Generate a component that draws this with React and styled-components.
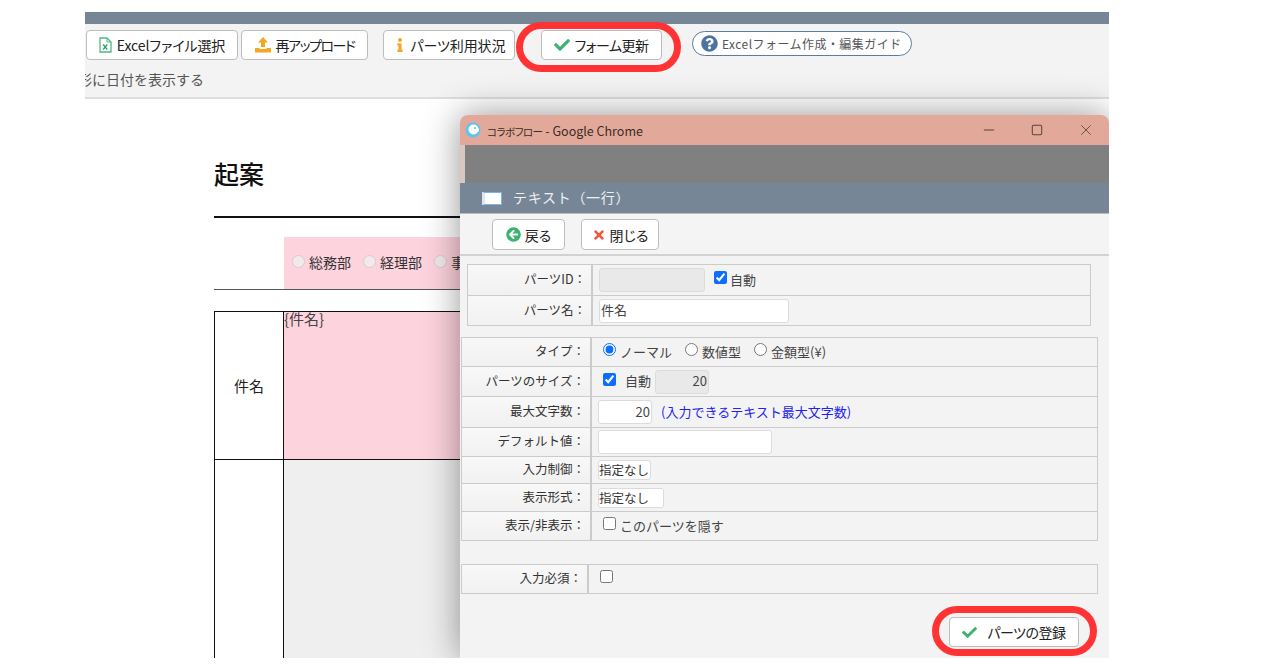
import React from 'react';
import styled, { createGlobalStyle } from 'styled-components';
import {
  FaArrowCircleLeft, FaCheck, FaInfo, FaQuestionCircle, FaTimes,
} from 'react-icons/fa';

const GlobalStyle = createGlobalStyle`
  html, body {
    margin: 0;
    padding: 0;
    background: #fff;
    overflow: hidden;
  }
  body {
    font-family: "Noto Sans CJK JP", "Noto Sans", sans-serif;
  }
  * { box-sizing: border-box; }
`;

const Screen = styled.div`
  position: relative;
  width: 1024px;
  height: 646px;
  margin: 12px 0 0 85px;
  overflow: hidden;
  background: #fff;
`;

const TopBar = styled.div`
  height: 12px;
  background: #768696;
`;

const Toolbar = styled.div`
  height: 75px;
  background: #f3f3f3;
  border-bottom: 2px solid #dedede;
  overflow: hidden;
`;

const ButtonRow = styled.div`
  display: flex;
  align-items: flex-start;
  padding: 6px 0 0 1px;
`;

const Button = styled.div`
  display: flex;
  align-items: center;
  justify-content: center;
  gap: ${(props) => props.gap || 4}px;
  flex: none;
  width: ${(props) => props.width}px;
  height: ${(props) => props.height || 30}px;
  margin-left: ${(props) => props.left || 0}px;
  background: #fff;
  border: 1px solid #bdbdbd;
  border-radius: 4px;
  font-size: 14px;
  font-feature-settings: "palt";
  letter-spacing: ${(props) => props.spacing || 0}px;
  color: #222;
  white-space: nowrap;
`;

const GuidePill = styled.div`
  display: flex;
  align-items: center;
  gap: 4px;
  flex: none;
  width: 220px;
  height: 25px;
  margin: 1px 0 0 30px;
  padding-left: 8px;
  background: #fff;
  border: 1px solid #5c7ca3;
  border-radius: 13px;
  font-size: 12px;
  letter-spacing: 0.45px;
  color: #555;
  white-space: nowrap;
`;

const HintText = styled.div`
  margin: 9px 0 0 -7px;
  font-size: 14px;
  line-height: 20px;
  color: #555;
`;

const DocArea = styled.div`
  padding-left: 129px;
`;

const DocTitle = styled.h1`
  height: 119px;
  margin: 0;
  padding-top: 54px;
  font-size: 25px;
  line-height: 40px;
  font-weight: 500;
  color: #111;
  border-bottom: 2px solid #111;
`;

const RadioLine = styled.div`
  height: 72px;
  padding: 19px 0 0 70px;
  border-bottom: 1px solid #555;
`;

const PinkStrip = styled.div`
  display: flex;
  align-items: center;
  gap: 12px;
  height: 52px;
  padding: 0 0 3px 8px;
  background: #fdd3de;
  font-size: 14px;
  color: #333;
`;

const RadioItem = styled.span`
  display: inline-flex;
  align-items: center;
  gap: 4px;
`;

const GhostRadio = styled.i`
  width: 13px;
  height: 13px;
  border-radius: 50%;
  background: #f3e9ec;
  border: 1px solid #d8ccd0;
`;

const SheetTable = styled.div`
  display: grid;
  grid-template-columns: 69px 1fr;
  grid-template-rows: 148px 1fr;
  height: 400px;
  margin-top: 21px;
  border: 1px solid #111;
  border-bottom: 0;
`;

const SheetLabel = styled.div`
  display: flex;
  align-items: center;
  justify-content: center;
  border-right: 1px solid #111;
  border-bottom: ${(props) => (props.last ? '0' : '1px solid #111')};
  font-size: 15px;
  color: #222;
`;

const SheetCell = styled.div`
  background: ${(props) => props.color};
  border-bottom: ${(props) => (props.last ? '0' : '1px solid #111')};
  font-size: 15px;
  line-height: 14px;
  color: #444;
`;

const Ring = styled.div`
  position: absolute;
  left: ${(props) => props.x}px;
  top: ${(props) => props.y}px;
  width: 165px;
  height: 50px;
  border: 7px solid #ff3333;
  border-radius: 25px;
  z-index: 5;
`;

const ChromeWindow = styled.div`
  position: absolute;
  left: 375px;
  top: 103px;
  width: 649px;
  height: 543px;
  display: flex;
  flex-direction: column;
  background: #f3f3f3;
  border-radius: 8px 8px 0 0;
  box-shadow: 0 0 36px rgba(0, 0, 0, 0.42);
  overflow: hidden;
`;

const TitleBar = styled.div`
  display: flex;
  align-items: center;
  flex: none;
  height: 30px;
  padding-left: 5px;
  background: #e2a99a;
  font-size: 12.5px;
  font-feature-settings: "palt";
  color: #3b2b27;
`;

const TitleText = styled.span`
  flex: 1;
  margin-left: 6px;
`;

const TitleKana = styled.span`
  font-size: 10.5px;
  letter-spacing: -0.5px;
`;

const WindowControl = styled.svg`
  width: 12px;
  height: 12px;
  margin-right: ${(props) => props.gap}px;
  fill: none;
  stroke: #5d423b;
`;

const GrayBand = styled.div`
  flex: none;
  height: 38px;
  background: #808080;
  border-left: 5px solid #d9c8c2;
`;

const HeadingBar = styled.div`
  display: flex;
  align-items: center;
  gap: 11px;
  flex: none;
  height: 30px;
  padding: 0 0 3px 22px;
  background: #768696;
  font-size: 14px;
  letter-spacing: 0.7px;
  color: #eef1f4;
`;

const HeadingIcon = styled.span`
  width: 20px;
  height: 13px;
  margin-top: 3px;
  background: #fff;
  border: 1px solid #7fb2ea;
  border-left: 3px solid #dfe7ee;
`;

const DialogToolbar = styled.div`
  display: flex;
  flex: none;
  height: 43px;
  padding: 5px 0 0 32px;
  background: #f4f4f4;
  border-bottom: 2px solid #d2d2d2;
  border-top: 1px solid #bbb;
`;

const FormBody = styled.div`
  flex: 1;
  padding-top: 8px;
  background: #f3f3f3;
`;

const FormSection = styled.div`
  width: ${(props) => props.width}px;
  margin: ${(props) => props.top || 0}px 0 0 ${(props) => props.left}px;
  border: 1px solid #cbcbcb;
`;

const FormRow = styled.div`
  display: flex;
  height: ${(props) => props.height}px;
  border-bottom: ${(props) => (props.last ? '0' : '1px solid #cbcbcb')};
`;

const RowLabel = styled.div`
  display: flex;
  align-items: center;
  justify-content: flex-end;
  flex: none;
  width: ${(props) => props.width}px;
  padding: 0 5px 3px 0;
  border-right: 2px solid #cbcbcb;
  background: linear-gradient(#f8f8f8, #f1f1f1);
  font-size: 12.5px;
  color: #333;
`;

const RowValue = styled.div`
  display: flex;
  align-items: center;
  flex: 1;
  padding: 0 0 2px ${(props) => props.pad || 6}px;
  font-size: 13px;
  color: #444;
`;

const TextBox = styled.input`
  flex: none;
  width: ${(props) => props.width}px;
  height: ${(props) => props.height || 24}px;
  margin: 2px 0 0 ${(props) => props.before || 0}px;
  padding: 0 1px 2px;
  border: 1px solid #dcdcdc;
  border-radius: 3px;
  background: ${(props) => (props.disabled ? '#e9e9e9' : '#fff')};
  font-family: inherit;
  font-size: 13px;
  color: #444;
  text-align: ${(props) => props.align || 'left'};
  outline: none;
`;

const PlainSelect = styled.div`
  flex: none;
  width: ${(props) => props.width}px;
  height: 20px;
  margin-top: 2px;
  padding-left: 0;
  border: 1px solid #dcdcdc;
  border-radius: 3px;
  background: #fff;
  font-size: 12.5px;
  line-height: 17px;
  color: #333;
  white-space: nowrap;
`;

const Tick = styled.input`
  flex: none;
  width: 13px;
  height: 13px;
  margin: 0 ${(props) => props.after || 4}px 3px ${(props) => props.before || 0}px;
  accent-color: #0d6efd;
`;

const Note = styled.span`
  margin-left: 9px;
  color: #2222ee;
`;

const FormFooter = styled.div`
  display: flex;
  justify-content: flex-end;
  padding: 23px 30px 0 0;
`;

const ExcelIcon = () => (
  <svg width="13" height="16" viewBox="0 0 13 16" fill="none">
    <path d="M1 1h7l4 4v10H1z" fill="#fff" stroke="#52b788" strokeWidth="1.3" />
    <path d="M8 1v4h4" stroke="#52b788" strokeWidth="1" />
    <path d="M4.2 7.5l4 5M8.2 7.5l-4 5" stroke="#2f9e6b" strokeWidth="1.3" />
  </svg>
);

const UploadIcon = () => (
  <svg width="16" height="16" viewBox="0 0 16 16" fill="#f5a623">
    <path d="M8 0l5 5.5H10V10H6V5.5H3z" />
    <path d="M0 11h4.5v1H11.5v-1H16v4.5H0z" />
  </svg>
);

const AppIcon = () => (
  <svg width="16" height="16" viewBox="0 0 16 16">
    <circle cx="8" cy="8" r="7.5" fill="#5cc4ee" />
    <circle cx="8.5" cy="7.5" r="5" fill="#fff" />
    <path d="M9 6.5h5v3H9z" fill="#fff" />
    <circle cx="10" cy="6" r="1" fill="#5cc4ee" />
  </svg>
);

const App = () => (
  <>
    <GlobalStyle />
    <Screen>
      <TopBar />
      <Toolbar>
        <ButtonRow>
          <Button width={152} gap={5} spacing={-0.1}>
            <ExcelIcon />
            Excelファイル選択
          </Button>
          <Button width={127} left={3} gap={5} spacing={-1.5}>
            <UploadIcon />
            再アップロード
          </Button>
          <Button width={132} left={15} spacing={-0.1}>
            <FaInfo color="#f5a623" size={14} />
            パーツ利用状況
          </Button>
          <Button width={121} left={26} spacing={-0.5}>
            <FaCheck color="#3cb371" size={16} />
            フォーム更新
          </Button>
          <GuidePill>
            <FaQuestionCircle color="#4f739f" size={17} />
            Excelフォーム作成・編集ガイド
          </GuidePill>
        </ButtonRow>
        <HintText>形に日付を表示する</HintText>
      </Toolbar>
      <DocArea>
        <DocTitle>起案</DocTitle>
        <RadioLine>
          <PinkStrip>
            <RadioItem><GhostRadio />総務部</RadioItem>
            <RadioItem><GhostRadio />経理部</RadioItem>
            <RadioItem><GhostRadio />事業部</RadioItem>
          </PinkStrip>
        </RadioLine>
        <SheetTable>
          <SheetLabel>件名</SheetLabel>
          <SheetCell color="#fdd3de">{'{件名}'}</SheetCell>
          <SheetLabel last />
          <SheetCell color="#efefef" last />
        </SheetTable>
      </DocArea>

      <ChromeWindow>
        <TitleBar>
          <AppIcon />
          <TitleText>
            <TitleKana>コラボフロー</TitleKana>
            {' - Google Chrome'}
          </TitleText>
          <WindowControl gap={36} viewBox="0 0 14 14">
            <path d="M1 7h12" strokeWidth="1.2" />
          </WindowControl>
          <WindowControl gap={37} viewBox="0 0 14 14">
            <rect x="1.5" y="1.5" width="11" height="11" rx="1.5" strokeWidth="1.2" />
          </WindowControl>
          <WindowControl gap={17} viewBox="0 0 14 14">
            <path d="M1.5 1.5l11 11M12.5 1.5l-11 11" strokeWidth="1" />
          </WindowControl>
        </TitleBar>
        <GrayBand />
        <HeadingBar>
          <HeadingIcon />
          テキスト（一行）
        </HeadingBar>
        <DialogToolbar>
          <Button width={73} height={31}>
            <FaArrowCircleLeft color="#3cb371" size={15} />
            戻る
          </Button>
          <Button width={78} height={31} left={16}>
            <FaTimes color="#f0593e" size={14} />
            閉じる
          </Button>
        </DialogToolbar>
        <FormBody>
          <FormSection width={624} left={7}>
            <FormRow height={31}>
              <RowLabel width={125}>パーツID：</RowLabel>
              <RowValue>
                <TextBox width={106} disabled />
                <Tick type="checkbox" defaultChecked before={9} after={3} />
                自動
              </RowValue>
            </FormRow>
            <FormRow height={29} last>
              <RowLabel width={125}>パーツ名：</RowLabel>
              <RowValue>
                <TextBox width={190} defaultValue="件名" />
              </RowValue>
            </FormRow>
          </FormSection>

          <FormSection width={637} left={1} top={11}>
            <FormRow height={29}>
              <RowLabel width={130}>タイプ：</RowLabel>
              <RowValue pad={11}>
                <Tick type="radio" name="kind" defaultChecked />
                ノーマル
                <Tick type="radio" name="kind" before={13} />
                数値型
                <Tick type="radio" name="kind" before={13} />
                金額型(¥)
              </RowValue>
            </FormRow>
            <FormRow height={30}>
              <RowLabel width={130}>パーツのサイズ：</RowLabel>
              <RowValue pad={11}>
                <Tick type="checkbox" defaultChecked after={9} />
                自動
                <TextBox width={54} before={4} disabled align="right" defaultValue="20" />
              </RowValue>
            </FormRow>
            <FormRow height={31}>
              <RowLabel width={130}>最大文字数：</RowLabel>
              <RowValue>
                <TextBox width={54} align="right" defaultValue="20" />
                <Note>(入力できるテキスト最大文字数)</Note>
              </RowValue>
            </FormRow>
            <FormRow height={29}>
              <RowLabel width={130}>デフォルト値：</RowLabel>
              <RowValue>
                <TextBox width={174} />
              </RowValue>
            </FormRow>
            <FormRow height={27}>
              <RowLabel width={130}>入力制御：</RowLabel>
              <RowValue>
                <PlainSelect width={53}>指定なし</PlainSelect>
              </RowValue>
            </FormRow>
            <FormRow height={28}>
              <RowLabel width={130}>表示形式：</RowLabel>
              <RowValue>
                <PlainSelect width={66}>指定なし</PlainSelect>
              </RowValue>
            </FormRow>
            <FormRow height={28} last>
              <RowLabel width={130}>表示/非表示：</RowLabel>
              <RowValue pad={11}>
                <Tick type="checkbox" />
                このパーツを隠す
              </RowValue>
            </FormRow>
          </FormSection>

          <FormSection width={637} left={1} top={23}>
            <FormRow height={28} last>
              <RowLabel width={127}>入力必須：</RowLabel>
              <RowValue pad={11}>
                <Tick type="checkbox" />
              </RowValue>
            </FormRow>
          </FormSection>

          <FormFooter>
            <Button width={130} gap={10} spacing={-0.5}>
              <FaCheck color="#3cb371" size={15} />
              パーツの登録
            </Button>
          </FormFooter>
        </FormBody>
      </ChromeWindow>

      <Ring x={431} y={10} />
      <Ring x={847} y={594} />
    </Screen>
  </>
);

export default App;
